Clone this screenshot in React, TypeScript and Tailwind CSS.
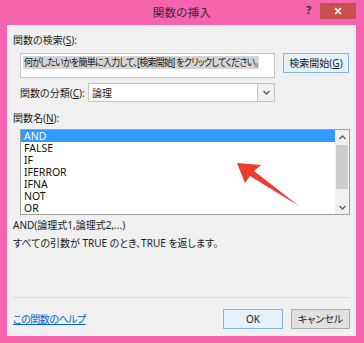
import React from "react";

const Chevron = ({ up }: { up?: boolean }) => (
  <svg width="7" height="5" viewBox="0 0 7 5">
    <path d={up ? "M0.5 4 L3.5 1 L6.5 4" : "M0.5 1 L3.5 4 L6.5 1"} fill="none" stroke="#606060" strokeWidth="1.3" />
  </svg>
);

export default function App() {
  const rows = ["AND", "FALSE", "IF", "IFERROR", "IFNA", "NOT", "OR"];
  return (
    <div className="relative w-[364px] h-[343px] bg-[#f564ad] flex flex-col font-['Noto_Sans','Noto_Sans_CJK_JP',sans-serif] text-[10px] leading-[14px] text-[#1a1a1a] [font-feature-settings:'palt'] overflow-hidden whitespace-nowrap">
      {/* title bar */}
      <div className="relative h-[25px] flex items-center justify-center shrink-0">
        <span className="text-[11.5px] text-[#3b2a33] tracking-[0.3px]">関数の挿入</span>
        <span className="absolute left-[306px] top-[3px] text-[11px] font-bold text-[#3a2a33]">?</span>
        <div className="absolute left-[320px] top-[3px] w-[36px] h-[16px] bg-[#c75050] flex items-center justify-center">
          <svg width="8" height="8" viewBox="0 0 8 8">
            <path d="M1 1 L7 7 M7 1 L1 7" stroke="#fff" strokeWidth="1.6" />
          </svg>
        </div>
      </div>
      {/* body */}
      <div className="ml-[7px] mr-[8px] mb-[7px] flex-1 bg-[#f0f0f0] flex flex-col pl-[6px] pr-[6px]">
        <div className="mt-[8px] h-[14px]">
          関数の検索(<span className="underline">S</span>):
        </div>
        <div className="mt-[6px] flex items-start">
          <div className="ml-[7px] w-[255px] h-[25px] bg-white border border-[#c4c4c4] pl-[2px] pt-[1px] overflow-hidden">
            <span className="bg-[#d4d4d4] inline-block h-[13px] leading-[13px] pl-[1px] pr-[1px] tracking-[-0.8px] scale-x-[0.9] origin-left">
              何がしたいかを簡単に入力して、[検索開始] をクリックしてください。
            </span>
          </div>
          <div className="ml-[8px] w-[66px] h-[20px] border border-[#7eb4ea] bg-[#e5f1fb] flex items-center justify-center">
            検索開始(<span className="underline">G</span>)
          </div>
        </div>
        <div className="mt-[5px] flex items-center">
          <div className="ml-[7px] w-[68px]">
            関数の分類(<span className="underline">C</span>):
          </div>
          <div className="w-[187px] h-[19px] bg-white border border-[#c4c4c4] flex items-center">
            <span className="pl-[3px] flex-1">論理</span>
            <div className="w-[17px] h-[17px] border-l border-[#c4c4c4] bg-[#f0f0f0] flex items-center justify-center">
              <Chevron />
            </div>
          </div>
        </div>
        <div className="mt-[9px] h-[14px]">
          関数名(<span className="underline">N</span>):
        </div>
        <div className="mt-[4px] ml-[7px] w-[330px] h-[86px] bg-white border border-[#a0a0a0] flex">
          <div className="flex-1 flex flex-col">
            {rows.map((r, i) => (
              <div
                key={r}
                className={
                  "h-[12px] leading-[12px] pl-[3px] text-[10.5px] " +
                  (i === 0 ? "bg-[#3399ff] text-white" : "text-[#111]")
                }
              >
                {r}
              </div>
            ))}
          </div>
          <div className="w-[14px] bg-[#f0f0f0] flex flex-col items-center">
            <div className="h-[14px] flex items-center justify-center">
              <Chevron up />
            </div>
            <div className="w-[12px] h-[44px] bg-[#cdcdcd] mt-[1px]" />
            <div className="flex-1" />
            <div className="h-[14px] flex items-center justify-center">
              <Chevron />
            </div>
          </div>
        </div>
        <div className="mt-[3px] h-[14px]">AND(論理式1,論理式2,...)</div>
        <div className="mt-[4px] h-[14px]">すべての引数が TRUE のとき、TRUE を返します。</div>
        <div className="mt-[47px] h-px bg-[#dcdcdc]" />
        <div className="mt-[11px] flex items-center">
          <span className="text-[#0066cc] underline tracking-[-0.5px]">この関数のヘルプ</span>
          <div className="flex-1" />
          <div className="w-[60px] h-[20px] border border-[#7eb4ea] bg-[#e5f1fb] flex items-center justify-center">
            OK
          </div>
          <div className="ml-[8px] w-[59px] h-[20px] border border-[#adadad] bg-[#e1e1e1] flex items-center justify-center">
            キャンセル
          </div>
        </div>
      </div>
      {/* red arrow annotation */}
      <svg className="absolute left-0 top-0 pointer-events-none" width="364" height="343" viewBox="0 0 364 343">
        <polygon points="237,163 261,165 254,171 299,206 250,176 245,183" fill="#ee3b2f" />
      </svg>
    </div>
  );
}
